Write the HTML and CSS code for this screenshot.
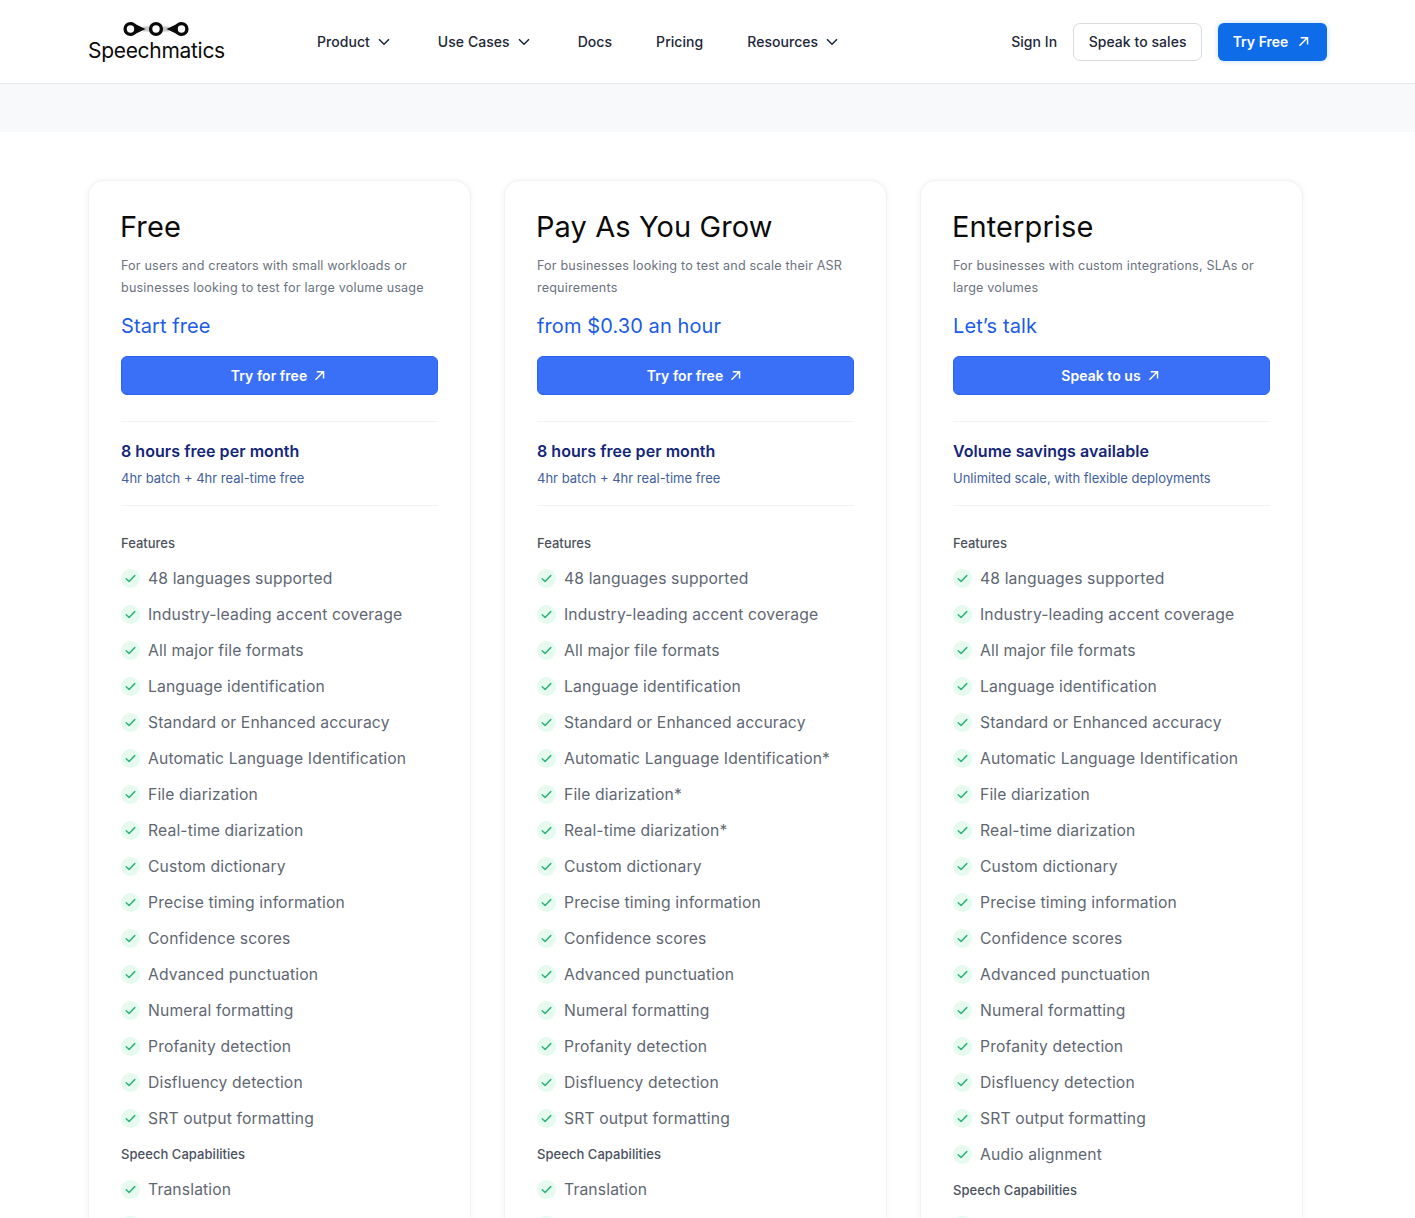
FILE: index.html
```html
<!DOCTYPE html>
<html lang="en">
<head>
<meta charset="utf-8">
<title>Speechmatics Pricing</title>
<link rel="stylesheet" href="styles.css">
</head>
<body>
<svg class="sprite" width="0" height="0" aria-hidden="true">
  <symbol id="check" viewBox="0 0 20 20"><path d="M5.5 10.2l3 3 6-6.2" fill="none" stroke="#2fb67c" stroke-width="1.6" stroke-linecap="round" stroke-linejoin="round"/></symbol>
  <symbol id="arrow" viewBox="0 0 12 12"><path d="M1.6 10.6L10.2 2M3 1.8H10.4V9.2" fill="none" stroke="currentColor" stroke-width="1.6"/></symbol>
  <symbol id="chev" viewBox="0 0 12 8"><path d="M1 1.3l5 5 5-5" fill="none" stroke="#14243f" stroke-width="1.5"/></symbol>
</svg>
<header class="nav">
  <a class="logo">
    <svg class="logo-mark" width="66" height="16" viewBox="0 0 66 16"><path d="M20 8h26" stroke="#c9c9c9" stroke-width="5"/><path d="M8 1L22.5 8 8 15zM58 1L43.5 8 58 15z" fill="#0b0b0b"/><circle cx="7.5" cy="8" r="5.4" fill="#fff" stroke="#0b0b0b" stroke-width="3.4"/><circle cx="33" cy="8" r="5.4" fill="#fff" stroke="#0b0b0b" stroke-width="3.4"/><circle cx="58.5" cy="8" r="5.4" fill="#fff" stroke="#0b0b0b" stroke-width="3.4"/></svg>
    <span class="logo-text">Speechmatics</span>
  </a>
  <nav class="menu">
    <a class="menu-item">Product <svg class="chev"><use href="#chev"/></svg></a>
    <a class="menu-item">Use Cases <svg class="chev"><use href="#chev"/></svg></a>
    <a class="menu-item">Docs</a>
    <a class="menu-item">Pricing</a>
    <a class="menu-item">Resources <svg class="chev"><use href="#chev"/></svg></a>
  </nav>
  <div class="actions">
    <a class="menu-item">Sign In</a>
    <a class="btn-outline">Speak to sales</a>
    <a class="btn-try">Try Free <svg class="arrow"><use href="#arrow"/></svg></a>
  </div>
</header>
<div class="band"></div>
<main class="plans">
  <section class="card">
    <h2>Free</h2>
    <p class="desc">For users and creators with small workloads or businesses looking to test for large volume usage</p>
    <div class="price">Start free</div>
    <a class="cta">Try for free <svg class="arrow"><use href="#arrow"/></svg></a>
    <div class="summary">
      <h3>8 hours free per month</h3>
      <p>4hr batch + 4hr real-time free</p>
    </div>
    <h4>Features</h4>
    <ul>
      <li><svg class="tick"><use href="#check"/></svg>48 languages supported</li>
      <li><svg class="tick"><use href="#check"/></svg>Industry-leading accent coverage</li>
      <li><svg class="tick"><use href="#check"/></svg>All major file formats</li>
      <li><svg class="tick"><use href="#check"/></svg>Language identification</li>
      <li><svg class="tick"><use href="#check"/></svg>Standard or Enhanced accuracy</li>
      <li><svg class="tick"><use href="#check"/></svg>Automatic Language Identification</li>
      <li><svg class="tick"><use href="#check"/></svg>File diarization</li>
      <li><svg class="tick"><use href="#check"/></svg>Real-time diarization</li>
      <li><svg class="tick"><use href="#check"/></svg>Custom dictionary</li>
      <li><svg class="tick"><use href="#check"/></svg>Precise timing information</li>
      <li><svg class="tick"><use href="#check"/></svg>Confidence scores</li>
      <li><svg class="tick"><use href="#check"/></svg>Advanced punctuation</li>
      <li><svg class="tick"><use href="#check"/></svg>Numeral formatting</li>
      <li><svg class="tick"><use href="#check"/></svg>Profanity detection</li>
      <li><svg class="tick"><use href="#check"/></svg>Disfluency detection</li>
      <li><svg class="tick"><use href="#check"/></svg>SRT output formatting</li>
    </ul>
    <h4 class="sub-head">Speech Capabilities</h4>
    <ul>
      <li><svg class="tick"><use href="#check"/></svg>Translation</li>
      <li><svg class="tick"><use href="#check"/></svg></li>
    </ul>
  </section>
  <section class="card">
    <h2>Pay As You Grow</h2>
    <p class="desc">For businesses looking to test and scale their ASR requirements</p>
    <div class="price">from $0.30 an hour</div>
    <a class="cta">Try for free <svg class="arrow"><use href="#arrow"/></svg></a>
    <div class="summary">
      <h3>8 hours free per month</h3>
      <p>4hr batch + 4hr real-time free</p>
    </div>
    <h4>Features</h4>
    <ul>
      <li><svg class="tick"><use href="#check"/></svg>48 languages supported</li>
      <li><svg class="tick"><use href="#check"/></svg>Industry-leading accent coverage</li>
      <li><svg class="tick"><use href="#check"/></svg>All major file formats</li>
      <li><svg class="tick"><use href="#check"/></svg>Language identification</li>
      <li><svg class="tick"><use href="#check"/></svg>Standard or Enhanced accuracy</li>
      <li><svg class="tick"><use href="#check"/></svg>Automatic Language Identification*</li>
      <li><svg class="tick"><use href="#check"/></svg>File diarization*</li>
      <li><svg class="tick"><use href="#check"/></svg>Real-time diarization*</li>
      <li><svg class="tick"><use href="#check"/></svg>Custom dictionary</li>
      <li><svg class="tick"><use href="#check"/></svg>Precise timing information</li>
      <li><svg class="tick"><use href="#check"/></svg>Confidence scores</li>
      <li><svg class="tick"><use href="#check"/></svg>Advanced punctuation</li>
      <li><svg class="tick"><use href="#check"/></svg>Numeral formatting</li>
      <li><svg class="tick"><use href="#check"/></svg>Profanity detection</li>
      <li><svg class="tick"><use href="#check"/></svg>Disfluency detection</li>
      <li><svg class="tick"><use href="#check"/></svg>SRT output formatting</li>
    </ul>
    <h4 class="sub-head">Speech Capabilities</h4>
    <ul>
      <li><svg class="tick"><use href="#check"/></svg>Translation</li>
      <li><svg class="tick"><use href="#check"/></svg></li>
    </ul>
  </section>
  <section class="card">
    <h2>Enterprise</h2>
    <p class="desc">For businesses with custom integrations, SLAs or large volumes</p>
    <div class="price">Let’s talk</div>
    <a class="cta">Speak to us <svg class="arrow"><use href="#arrow"/></svg></a>
    <div class="summary">
      <h3>Volume savings available</h3>
      <p>Unlimited scale, with flexible deployments</p>
    </div>
    <h4>Features</h4>
    <ul>
      <li><svg class="tick"><use href="#check"/></svg>48 languages supported</li>
      <li><svg class="tick"><use href="#check"/></svg>Industry-leading accent coverage</li>
      <li><svg class="tick"><use href="#check"/></svg>All major file formats</li>
      <li><svg class="tick"><use href="#check"/></svg>Language identification</li>
      <li><svg class="tick"><use href="#check"/></svg>Standard or Enhanced accuracy</li>
      <li><svg class="tick"><use href="#check"/></svg>Automatic Language Identification</li>
      <li><svg class="tick"><use href="#check"/></svg>File diarization</li>
      <li><svg class="tick"><use href="#check"/></svg>Real-time diarization</li>
      <li><svg class="tick"><use href="#check"/></svg>Custom dictionary</li>
      <li><svg class="tick"><use href="#check"/></svg>Precise timing information</li>
      <li><svg class="tick"><use href="#check"/></svg>Confidence scores</li>
      <li><svg class="tick"><use href="#check"/></svg>Advanced punctuation</li>
      <li><svg class="tick"><use href="#check"/></svg>Numeral formatting</li>
      <li><svg class="tick"><use href="#check"/></svg>Profanity detection</li>
      <li><svg class="tick"><use href="#check"/></svg>Disfluency detection</li>
      <li><svg class="tick"><use href="#check"/></svg>SRT output formatting</li>
      <li><svg class="tick"><use href="#check"/></svg>Audio alignment</li>
    </ul>
    <h4 class="sub-head">Speech Capabilities</h4>
    <ul>
      <li><svg class="tick"><use href="#check"/></svg></li>
    </ul>
  </section>
</main>
</body>
</html>
```
FILE: styles.css
```css
* { box-sizing: border-box; }
html, body { margin: 0; height: 1218px; overflow: hidden; }
body { background: #fff; font-family: Inter, "Liberation Sans", sans-serif; color: #14243f; }
a { text-decoration: none; }
.sprite { position: absolute; }

.nav { height: 84px; border-bottom: 1px solid #e6e8ec; display: flex; align-items: center; padding: 0 88px; }
.logo { width: 229px; display: flex; flex-direction: column; align-items: flex-start; }
.logo-mark { margin: 0 0 0 35px; }
.logo-text { font-size: 21px; line-height: 24px; color: #0b0b0b; letter-spacing: -0.3px; margin-top: 2px; }
.menu { display: flex; gap: 44px; }
.menu-item { font-size: 14px; font-weight: 500; color: #1d2738; line-height: 20px; display: flex; align-items: center; gap: 8px; letter-spacing: 0.05px; white-space: nowrap; }
.chev { width: 12px; height: 8px; margin-right: 4px; }
.actions { margin-left: auto; display: flex; align-items: center; }
.btn-outline { font-size: 14px; font-weight: 500; color: #1d2738; letter-spacing: 0.05px; height: 38px; margin-left: 16px; padding: 0 14.5px; border: 1px solid #d9dbdf; border-radius: 7px; display: flex; align-items: center; background: #fff; }
.btn-try { font-size: 14px; font-weight: 600; color: #fff; height: 38px; margin-left: 16px; width: 109px; padding-right: 3px; border-radius: 6px; display: flex; align-items: center; justify-content: center; gap: 10px; background: #0f6ce8; box-shadow: 0 0 4px 1px #cfe4fb; }
.arrow { width: 11px; height: 11px; color: #fff; }

.band { height: 48px; background: #f8f9fb; }

.plans { display: grid; grid-template-columns: repeat(3, 383px); gap: 33px; padding: 48px 0 0 88px; }
.card { padding: 28px 32px 0; border: 1px solid #f1f2f4; border-radius: 16px; box-shadow: 0 0 6px rgba(20, 30, 50, 0.05); background: #fff; }
h2 { margin: 0 0 0 -1px; font-size: 29px; line-height: 36px; font-weight: 400; color: #0b0b0b; letter-spacing: 0.1px; }
.desc { margin: 10px 0 0; font-size: 12.6px; line-height: 22px; height: 44px; color: #6b7380; letter-spacing: 0.17px; }
.price { margin-top: 13px; font-size: 20px; line-height: 28px; color: #1c5ce6; letter-spacing: 0.1px; }
.cta { margin-top: 16px; height: 39px; padding-right: 3px; border-radius: 6px; background: #3a6ff8; border: 1px solid #2c63f0; color: #fff; font-size: 14px; font-weight: 600; display: flex; align-items: center; justify-content: center; gap: 7px; letter-spacing: 0.05px; }
.summary { margin-top: 26px; height: 85px; border-top: 1px solid #f2f3f5; border-bottom: 1px solid #f2f3f5; padding-top: 17px; }
h3 { margin: 0; font-size: 16px; line-height: 24px; font-weight: 600; color: #14267a; letter-spacing: 0.05px; }
.summary p { margin: 5px 0 0; font-size: 13px; line-height: 20px; color: #41609c; }
h4 { margin: 27px 0 0; font-size: 13px; line-height: 20px; font-weight: 500; color: #4a5260; }
ul { list-style: none; margin: 7px 0 0; padding: 0; }
li { height: 36px; display: flex; align-items: center; gap: 8px; font-size: 15.7px; color: #5f6773; letter-spacing: 0.14px; white-space: nowrap; }
.tick { width: 19px; height: 19px; border-radius: 50%; background: #e6faef; flex: none; }
.sub-head { margin: 8px 0 -1px; letter-spacing: 0.05px; }
.sub-head + ul { margin-top: 8px; }
```
